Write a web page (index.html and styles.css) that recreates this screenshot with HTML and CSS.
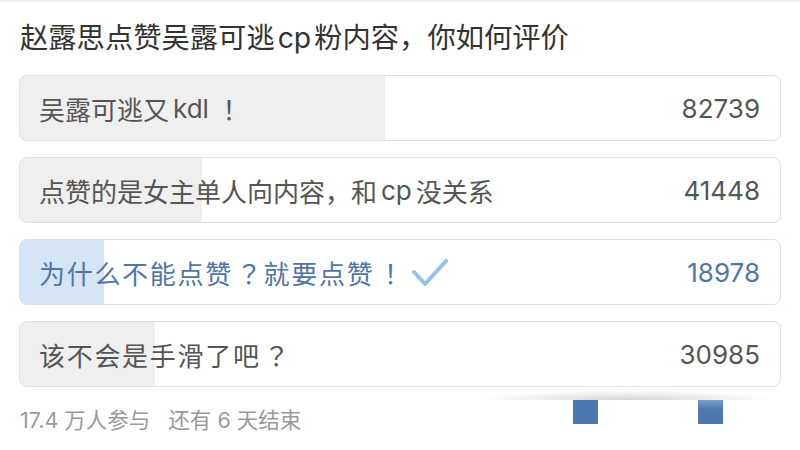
FILE: index.html
```html
<!DOCTYPE html>
<html lang="zh-CN">
<head>
<meta charset="utf-8">
<title>投票</title>
<link rel="stylesheet" href="styles.css">
</head>
<body>
<div class="topbar"></div>
<main class="poll">
  <h1 class="title">赵露思点赞吴露可逃<span class="latin">cp</span>粉内容，你如何评价</h1>
  <ul class="options">
    <li class="option" style="--p: 48%">
      <span class="label">吴露可逃又<span class="latin">kdl</span><span class="punct">！</span></span>
      <span class="count">82739</span>
    </li>
    <li class="option" style="--p: 24%">
      <span class="label">点赞的是女主单人向内容，和<span class="latin">cp</span>没关系</span>
      <span class="count">41448</span>
    </li>
    <li class="option option-chosen option-wide" style="--p: 11%">
      <span class="label">为什么不能点赞<span class="punct">？</span>就要点赞<span class="punct">！</span><svg class="check" width="36" height="28" viewBox="0 0 36 28"><polyline points="2,13 13,25 34,2" fill="none" stroke="#92c3ee" stroke-width="4" stroke-linecap="round" stroke-linejoin="round"/></svg></span>
      <span class="count">18978</span>
    </li>
    <li class="option option-wide" style="--p: 17.8%">
      <span class="label">该不会是手滑了吧<span class="punct">？</span></span>
      <span class="count">30985</span>
    </li>
  </ul>
  <div class="footer">
    <span class="meta">17.4 万人参与</span>
    <span class="meta">还有 6 天结束</span>
    <div class="shadow"></div>
    <div class="dot dot-a"></div>
    <div class="dot dot-b"></div>
  </div>
</main>
</body>
</html>
```
FILE: styles.css
```css
* { box-sizing: border-box; }
html, body {
  margin: 0;
  padding: 0;
  background: #fff;
  width: 800px;
  height: 450px;
  overflow: hidden;
}
body {
  font-family: "Inter", "Noto Sans CJK SC", sans-serif;
  color: #555;
}
.topbar {
  height: 2px;
  background: #f1f1f1;
}
.poll {
  padding: 16px 19px 0 19px;
}
.title {
  margin: 0 0 17px 1px;
  font-size: 28.3px;
  font-weight: 400;
  line-height: 40px;
  color: #333;
  white-space: nowrap;
}
.latin {
  margin: 0 3px;
}
.option .latin {
  margin: 0 4px;
}
.punct {
  font-family: "Noto Sans CJK JP", sans-serif;
  margin-left: 3px;
}
.options {
  list-style: none;
  margin: 0;
  padding: 0;
  display: flex;
  flex-direction: column;
  gap: 16px;
}
.option {
  height: 66px;
  border: 1px solid #e0e0e0;
  border-radius: 8px;
  display: flex;
  align-items: center;
  justify-content: space-between;
  padding: 0 20px 0 19px;
  background: linear-gradient(to right, #efefef 0, #efefef var(--p), #fff var(--p));
  font-size: 26px;
  color: #555;
}
.option-wide .label {
  letter-spacing: 1.7px;
}
.option-chosen {
  border-color: #d2e3f1;
  background: linear-gradient(to right, #d6e5f5 0, #d6e5f5 var(--p), #fff var(--p));
  color: #4f76a6;
}
.label {
  display: flex;
  align-items: center;
  white-space: nowrap;
}
.check {
  margin-left: 7px;
  margin-top: 2px;
}
.count {
  font-size: 26px;
}
.footer {
  position: relative;
  margin-top: 18px;
  display: flex;
  gap: 18px;
  padding-left: 1px;
  font-size: 21.5px;
  line-height: 30px;
  color: #999;
}
.shadow {
  position: absolute;
  left: 461px;
  top: -15px;
  width: 295px;
  height: 10px;
  background: radial-gradient(ellipse 50% 100% at 50% 100%, rgba(0,0,0,0.16), rgba(0,0,0,0.05) 70%, rgba(0,0,0,0) 100%);
}
.dot {
  position: absolute;
  top: -5px;
  width: 25px;
  height: 24px;
  background: #4b78ae;
}
.dot-a { left: 554px; }
.dot-b {
  left: 679px;
  background: linear-gradient(to bottom, #7d9ec6 0, #4b78ae 40%);
}
```
